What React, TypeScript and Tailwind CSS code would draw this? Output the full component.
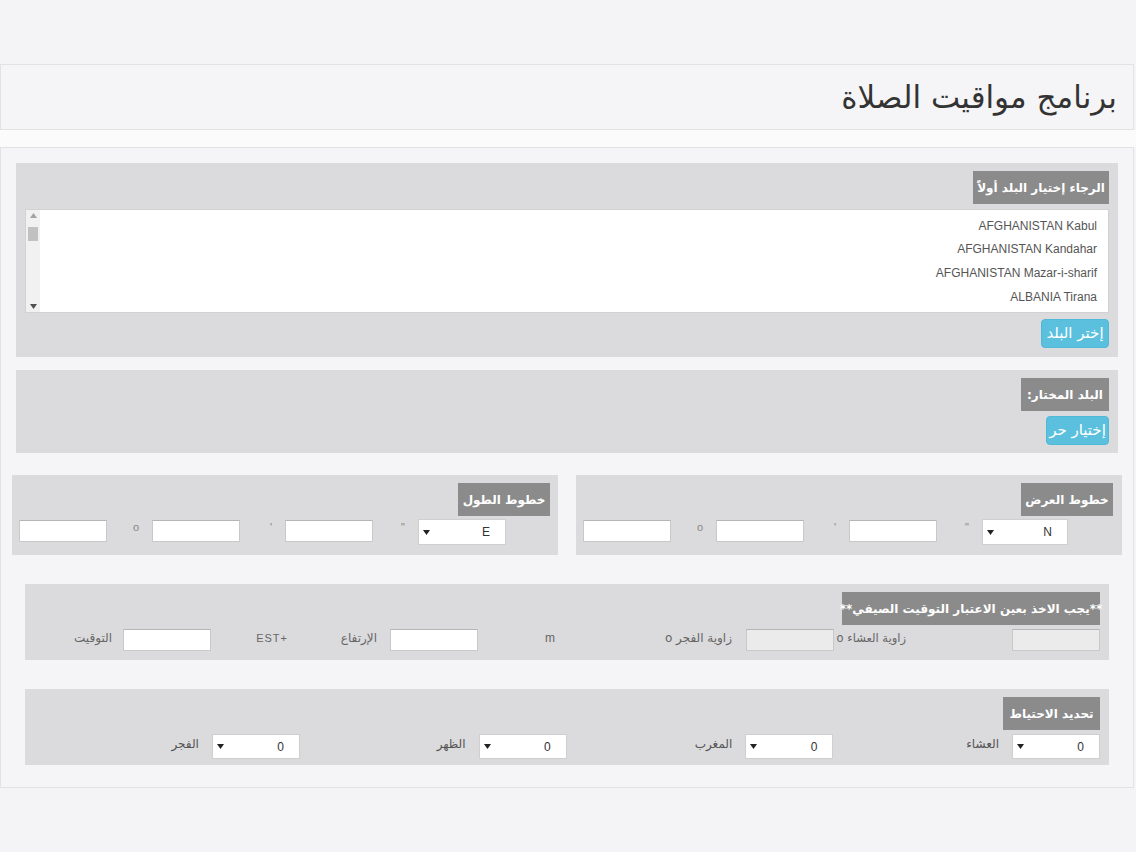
import React from "react";

function Tag({ w, children }: { w: string; children: React.ReactNode }) {
  return (
    <div
      className={`${w} h-[33px] shrink-0 bg-[#8b8b8b] text-white font-bold text-[12px] flex items-center justify-center whitespace-nowrap font-['DejaVu_Sans',sans-serif]`}
    >
      {children}
    </div>
  );
}

function Field({ disabled, cls }: { disabled?: boolean; cls?: string }) {
  return (
    <input
      type="text"
      disabled={disabled}
      className={`w-[88px] h-[22px] shrink-0 border border-[#c9c9c9] border-t-[#b5b5b5] outline-none ${
        disabled ? "bg-[#ebebeb]" : "bg-white"
      } ${cls ?? ""}`}
    />
  );
}

function Arrow() {
  return (
    <svg width="7" height="5" viewBox="0 0 7 5" className="shrink-0">
      <path d="M0 0 L7 0 L3.5 5 Z" fill="#222" />
    </svg>
  );
}

function Sel({ value, w, h, cls }: { value: string; w: string; h: string; cls?: string }) {
  return (
    <div
      className={`${w} ${h} shrink-0 bg-white border border-[#cfcfcf] flex items-center justify-between pr-[15px] pl-[4px] ${cls ?? ""}`}
    >
      <span className="text-[12px] text-[#333] font-['Liberation_Sans',Arial,sans-serif]">{value}</span>
      <Arrow />
    </div>
  );
}

function Sym({ c }: { c: string }) {
  return (
    <div className="w-[45px] shrink-0 pr-[13px] text-[11px] leading-[14px] mt-[1px] text-[#888] font-['Liberation_Sans',Arial,sans-serif]">
      {c}
    </div>
  );
}

const items = [
  "AFGHANISTAN Kabul",
  "AFGHANISTAN Kandahar",
  "AFGHANISTAN Mazar-i-sharif",
  "ALBANIA Tirana",
];

export default function App() {
  return (
    <div dir="rtl" className="min-h-[852px] bg-[#f4f4f6] font-['DejaVu_Sans',sans-serif]">
      <div className="h-[64px]" />
      {/* header */}
      <div className="mr-[2px] h-[66px] border border-[#e2e2e4] bg-[#f5f5f7] flex items-center pr-[16px]">
        <h1 className="text-[31px] font-normal text-[#333] leading-none">برنامج مواقيت الصلاة</h1>
      </div>
      <div className="h-[17px] bg-[#fbfbfc]" />
      {/* outer panel */}
      <div className="mr-[2px] h-[641px] border border-[#e2e2e4] bg-[#f5f5f7] pt-[15px]">
        {/* section 1 */}
        <div className="mx-[15px] h-[194px] bg-[#dbdadc] pt-[8px] pr-[9px] pl-[9px] flex flex-col items-start">
          <Tag w="w-[136px]">الرجاء إختيار البلد أولاً</Tag>
          <div className="mt-[5px] h-[104px] w-full bg-white border border-[#d2d2d2] flex">
            <div className="flex-1 pt-[4px] pr-[11px] font-['Liberation_Sans',Arial,sans-serif] text-[12px] text-[#555]">
              {items.map((t) => (
                <div key={t} className="h-[23.6px] flex items-center">
                  {t}
                </div>
              ))}
            </div>
            <div className="w-[14px] h-full bg-[#f1f1f1] flex flex-col items-center justify-between py-[3px]">
              <svg width="7" height="5" viewBox="0 0 7 5">
                <path d="M0 5 L7 5 L3.5 0 Z" fill="#a3a3a3" />
              </svg>
              <div className="w-[10px] h-[14px] bg-[#c1c1c1] -mt-[54px]" />
              <svg width="7" height="5" viewBox="0 0 7 5">
                <path d="M0 0 L7 0 L3.5 5 Z" fill="#505050" />
              </svg>
            </div>
          </div>
          <button className="mt-[6px] w-[68px] h-[29px] rounded-[4px] bg-[#5bc0de] border border-[#4fb9d8] text-white text-[15px] leading-none flex items-center justify-center">
            إختر البلد
          </button>
        </div>

        {/* section 2 */}
        <div className="mx-[15px] mt-[13px] h-[83px] bg-[#dbdadc] pt-[8px] pr-[9px] flex flex-col items-start">
          <Tag w="w-[88px]">البلد المختار:</Tag>
          <button className="mt-[5px] w-[63px] h-[29px] rounded-[4px] bg-[#5bc0de] border border-[#4fb9d8] text-white text-[15px] leading-none flex items-center justify-center">
            إختيار حر
          </button>
        </div>

        {/* section 3 */}
        <div className="mx-[11px] mt-[22px] flex justify-between">
          <div className="w-[546px] h-[80px] bg-[#dbdadc] pt-[8px] pr-[9px] flex flex-col items-start">
            <Tag w="w-[92px]">خطوط العرض</Tag>
            <div className="mt-[3px] mr-[45px] flex items-start">
              <Sel value="N" w="w-[86px]" h="h-[26px]" />
              <Sym c={'"'} />
              <Field cls="mt-[1px]" />
              <Sym c="'" />
              <Field cls="mt-[1px]" />
              <Sym c="o" />
              <Field cls="mt-[1px]" />
            </div>
          </div>
          <div className="w-[546px] h-[80px] bg-[#dbdadc] pt-[8px] pr-[8px] flex flex-col items-start">
            <Tag w="w-[92px]">خطوط الطول</Tag>
            <div className="mt-[3px] mr-[44px] flex items-start">
              <Sel value="E" w="w-[88px]" h="h-[26px]" />
              <Sym c={'"'} />
              <Field cls="mt-[1px]" />
              <Sym c="'" />
              <Field cls="mt-[1px]" />
              <Sym c="o" />
              <Field cls="mt-[1px]" />
            </div>
          </div>
        </div>

        {/* section 4 */}
        <div className="mx-[24px] mt-[29px] h-[76px] bg-[#dbdadc] pt-[8px] pr-[9px] flex flex-col items-start">
          <Tag w="w-[258px]">**يجب الاخذ بعين الاعتبار التوقيت الصيفي**</Tag>
          <div className="mt-[4px] flex items-start text-[12px] leading-[18px] text-[#666]">
            <Field disabled />
            <div className="ms-[106px] w-[72px] whitespace-nowrap text-[11.5px]">زاوية العشاء o</div>
            <Field disabled />
            <div className="ms-[14px] w-[177px] whitespace-nowrap">زاوية الفجر o</div>
            <div className="w-[20px] font-['Liberation_Sans',Arial,sans-serif]">m</div>
            <Field cls="ms-[57px]" />
            <div className="ms-[13px] w-[89px] whitespace-nowrap">الإرتفاع</div>
            <div className="w-[77px] font-['Liberation_Sans',Arial,sans-serif] text-[11px] tracking-[1px]">
              <span dir="ltr">EST+</span>
            </div>
            <Field />
            <div className="ms-[11px] whitespace-nowrap">التوقيت</div>
          </div>
        </div>

        {/* section 5 */}
        <div className="mx-[24px] mt-[29px] h-[76px] bg-[#dbdadc] pt-[8px] pr-[9px] flex flex-col items-start">
          <Tag w="w-[97px]">تحديد الاحتياط</Tag>
          <div className="mt-[4px] flex items-start text-[12px] leading-[18px] text-[#555]">
            {["العشاء", "المغرب", "الظهر", "الفجر"].map((l) => (
              <div key={l} className="w-[266.7px] flex items-start">
                <Sel value="0" w="w-[88px]" h="h-[25px]" />
                <div className="ms-[13px] mt-[1px] whitespace-nowrap">{l}</div>
              </div>
            ))}
          </div>
        </div>
      </div>
    </div>
  );
}
